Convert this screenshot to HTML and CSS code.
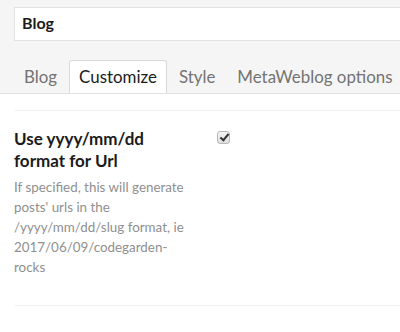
FILE: index.html
```html
<!DOCTYPE html>
<html lang="en">
<head>
    <meta charset="UTF-8">
    <title>Blog - Customize</title>
    <link rel="stylesheet" href="styles.css">
</head>
<body>
    <header class="editor-header">
        <input type="text" class="name-input" value="Blog">
        <ul class="tabs">
            <li><a href="#">Blog</a></li>
            <li><a href="#" class="active">Customize</a></li>
            <li><a href="#">Style</a></li>
            <li><a href="#">MetaWeblog options</a></li>
        </ul>
    </header>

    <div class="content">
        <div class="property">
            <div class="property-label">
                <label for="dateUrl">Use yyyy/mm/dd format for Url</label>
                <p class="description">If specified, this will generate posts' urls in the /yyyy/mm/dd/slug format, ie 2017/06/09/codegarden-rocks</p>
            </div>
            <div class="property-value">
                <input type="checkbox" id="dateUrl" checked>
            </div>
        </div>
    </div>
</body>
</html>
```

FILE: styles.css
```css
* {
    margin: 0;
    padding: 0;
    box-sizing: border-box;
    font-family: Lato, 'Open Sans', sans-serif;
}

body {
    background-color: #fff;
    overflow: hidden;
}

.editor-header {
    background-color: #f5f5f5;
    border-bottom: 1px solid #e1e1e1;
    padding: 7px 0 0 14px;
    overflow: hidden;
}

.name-input {
    display: block;
    width: 420px;
    height: 34px;
    padding: 0 7px 4px;
    font-size: 16px;
    font-weight: bold;
    color: #1b1b1b;
    background-color: #fff;
    border: 1px solid #e3e3e3;
    outline: none;
}

.tabs {
    display: flex;
    list-style: none;
    margin-top: 19px;
    margin-bottom: -1px;
    white-space: nowrap;
}

.tabs li {
    margin-right: 2px;
}

.tabs li a {
    display: block;
    height: 34px;
    line-height: 31px;
    padding: 0 9px;
    font-size: 16.9px;
    color: #737373;
    text-decoration: none;
    border: 1px solid transparent;
    border-radius: 3px 3px 0 0;
}

.tabs li a.active {
    background-color: #fff;
    color: #1b1b1b;
    border-color: #d9d9d9;
    border-bottom-color: #fff;
}

.content {
    padding: 16px 0 0 14px;
}

.property {
    display: flex;
    border-top: 1px solid #f2f2f2;
    border-bottom: 1px solid #f2f2f2;
    padding: 17px 0 28px;
}

.property-label {
    width: 190px;
    flex-shrink: 0;
    padding-right: 10px;
}

.property-label label {
    display: block;
    font-size: 17px;
    font-weight: bold;
    line-height: 22px;
    color: #1b1b1b;
}

.description {
    margin-top: 5px;
    font-size: 13.4px;
    line-height: 20px;
    color: #8f8f8f;
}

.property-value {
    padding: 3px 0 0 13px;
}

.property-value input {
    appearance: none;
    -webkit-appearance: none;
    position: relative;
    display: block;
    width: 13px;
    height: 13px;
    margin: 0;
    border: 1px solid #b9b9b9;
    border-radius: 3px;
    background: linear-gradient(#f4f4f4, #dedede);
}

.property-value input:checked::after {
    content: '';
    position: absolute;
    left: 4px;
    top: 0px;
    width: 3px;
    height: 7px;
    border: solid #333;
    border-width: 0 2px 2px 0;
    transform: rotate(40deg);
}
```
